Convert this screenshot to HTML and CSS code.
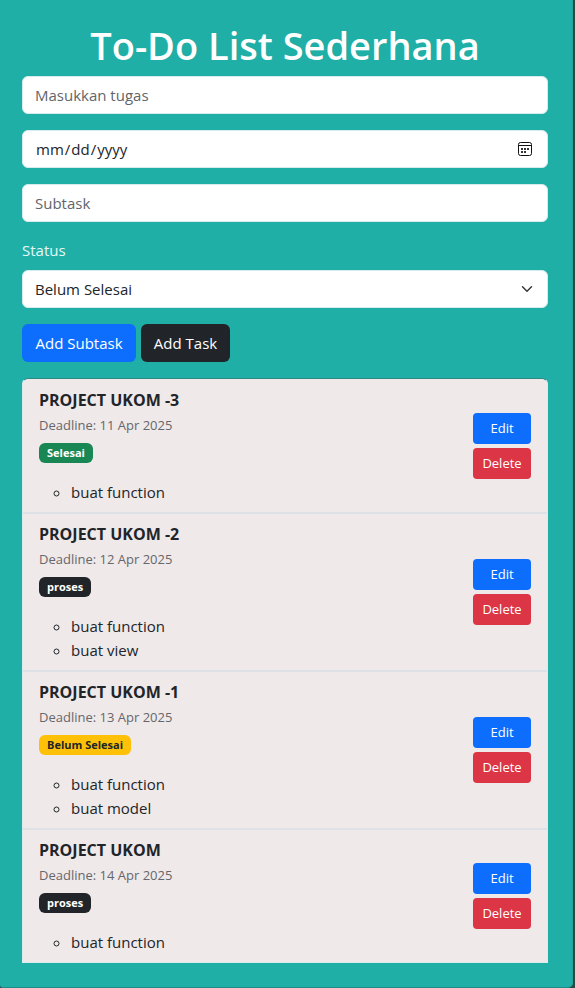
FILE: index.html
```html
<!DOCTYPE html>
<html lang="id">
<head>
<meta charset="utf-8">
<meta name="viewport" content="width=device-width, initial-scale=1">
<title>To-Do List Sederhana</title>
<link rel="stylesheet" href="styles.css">
</head>
<body>
<main class="page">
  <h1 class="page-title">To-Do List Sederhana</h1>
  <form class="task-form">
    <input class="control" type="text" placeholder="Masukkan tugas" aria-label="Masukkan tugas">
    <input class="control" type="date" aria-label="Deadline">
    <input class="control" type="text" placeholder="Subtask" aria-label="Subtask">
    <div class="field">
      <label for="status">Status</label>
      <select class="control select" id="status">
        <option>Belum Selesai</option>
        <option>proses</option>
        <option>Selesai</option>
      </select>
    </div>
    <div class="form-actions">
      <button class="btn btn-primary btn-subtask" type="button">Add Subtask</button>
      <button class="btn btn-dark btn-task" type="button">Add Task</button>
    </div>
  </form>
  <ul class="task-list">
    <li class="task">
      <div class="task-body">
        <strong class="task-name">PROJECT UKOM -3</strong>
        <span class="deadline">Deadline: 11 Apr 2025</span>
        <span class="badge badge-success">Selesai</span>
        <ul class="subtasks"><li>buat function</li></ul>
      </div>
      <div class="task-actions">
        <button class="btn btn-small btn-primary" type="button">Edit</button>
        <button class="btn btn-small btn-danger" type="button">Delete</button>
      </div>
    </li>
    <li class="task">
      <div class="task-body">
        <strong class="task-name">PROJECT UKOM -2</strong>
        <span class="deadline">Deadline: 12 Apr 2025</span>
        <span class="badge badge-dark">proses</span>
        <ul class="subtasks"><li>buat function</li><li>buat view</li></ul>
      </div>
      <div class="task-actions">
        <button class="btn btn-small btn-primary" type="button">Edit</button>
        <button class="btn btn-small btn-danger" type="button">Delete</button>
      </div>
    </li>
    <li class="task">
      <div class="task-body">
        <strong class="task-name">PROJECT UKOM -1</strong>
        <span class="deadline">Deadline: 13 Apr 2025</span>
        <span class="badge badge-warning">Belum Selesai</span>
        <ul class="subtasks"><li>buat function</li><li>buat model</li></ul>
      </div>
      <div class="task-actions">
        <button class="btn btn-small btn-primary" type="button">Edit</button>
        <button class="btn btn-small btn-danger" type="button">Delete</button>
      </div>
    </li>
    <li class="task">
      <div class="task-body">
        <strong class="task-name">PROJECT UKOM</strong>
        <span class="deadline">Deadline: 14 Apr 2025</span>
        <span class="badge badge-dark">proses</span>
        <ul class="subtasks"><li>buat function</li></ul>
      </div>
      <div class="task-actions">
        <button class="btn btn-small btn-primary" type="button">Edit</button>
        <button class="btn btn-small btn-danger" type="button">Delete</button>
      </div>
    </li>
  </ul>
</main>
</body>
</html>
```
FILE: styles.css
```css
* { box-sizing: border-box; }

body {
  margin: 0;
  padding-right: 2px;
  background: #2d4743;
  color: #212529;
  font-family: "Open Sans", "Noto Sans", sans-serif;
  font-size: 15px;
  line-height: 24px;
}

.page {
  min-height: 100vh;
  padding: 21px 24px 24px 22px;
  background: #1fafa7;
  border-right: 1px solid #1fa39b;
  border-bottom: 1px solid #1b8d86;
  border-radius: 0 0 5px 3px;
}

.page-title {
  margin: 0 0 7px;
  color: #fff;
  font-size: 38px;
  font-weight: 600;
  line-height: 48px;
  text-align: center;
}

.task-form {
  display: flex;
  flex-direction: column;
  gap: 16px;
  margin-bottom: 16px;
}

.control {
  display: block;
  width: 100%;
  height: 38px;
  margin: 0;
  padding: 6px 12px;
  border: 1px solid #d5ecec;
  border-radius: 6px;
  background: #fff;
  color: #212529;
  font: inherit;
  appearance: none;
}

.control::placeholder { color: #5f656b; opacity: 1; }

.control::-webkit-datetime-edit,
.control::-webkit-datetime-edit-fields-wrapper { padding: 0; }

.control::-webkit-calendar-picker-indicator {
  width: 16px;
  height: 16px;
  margin: 0 2px 0 0;
  padding: 0;
  background: url("data:image/svg+xml,%3Csvg xmlns='http://www.w3.org/2000/svg' viewBox='0 0 16 16'%3E%3Crect x='1.5' y='1.5' width='13' height='13' rx='2' fill='none' stroke='%23111'/%3E%3Cpath d='M1 4.5h14' stroke='%23111'/%3E%3Cpath d='M4 7h2v2H4zM7 7h2v2H7zM10 7h2v2h-2zM4 10h2v2H4zM7 10h2v2H7z' fill='%23333'/%3E%3C/svg%3E") center / 16px no-repeat;
}

.field {
  display: flex;
  flex-direction: column;
  gap: 8px;
}

.field label { color: #e6f8f7; }

.select {
  padding-right: 36px;
  background: #fff url("data:image/svg+xml,%3Csvg xmlns='http://www.w3.org/2000/svg' viewBox='0 0 16 16'%3E%3Cpath fill='none' stroke='%23343a40' stroke-linecap='round' stroke-linejoin='round' stroke-width='2' d='m2 5 6 6 6-6'/%3E%3C/svg%3E") right 14px center / 12px no-repeat;
}

.form-actions {
  display: flex;
  gap: 5px;
}

.btn {
  padding: 0 12px;
  border: 0;
  border-radius: 6px;
  color: #fff;
  font: inherit;
  line-height: 38px;
  white-space: nowrap;
}

.btn-subtask { min-width: 114px; }
.btn-task { min-width: 89px; }
.btn-primary { background: #0d6efd; }
.btn-dark { background: #212529; }
.btn-danger { background: #dc3545; }

.btn-small {
  padding: 0 8px;
  border-radius: 4px;
  font-size: 13px;
  line-height: 31px;
}

.task-list {
  margin: 0;
  padding: 0;
  list-style: none;
  border: 1px solid #dcebec;
  border-top-color: #2e8781;
  border-radius: 6px 6px 0 0;
  background: #f0e9e9;
}

.task {
  display: flex;
  align-items: center;
  justify-content: space-between;
  padding: 9px 16px 8px;
  border-bottom: 2px solid #dee2e6;
}

.task + .task { padding-top: 8px; }

.task:last-child { border-bottom: 0; }

.task-body {
  display: flex;
  flex-direction: column;
  align-items: flex-start;
}

.task-name { font-size: 16px; }

.deadline {
  color: #66676b;
  font-size: 13px;
  line-height: 26px;
}

.badge {
  margin: 5px 0 17px;
  padding: 0 8px;
  border-radius: 6px;
  color: #fff;
  font-size: 11px;
  font-weight: 700;
  line-height: 20px;
}

.badge-success { background: #198754; }
.badge-dark { background: #212529; }
.badge-warning { background: #ffc107; color: #212529; }

.subtasks {
  margin: 0;
  padding-left: 32px;
  list-style: circle;
}

.task-actions {
  display: flex;
  flex-direction: column;
  gap: 4px;
  min-width: 58px;
}
```
